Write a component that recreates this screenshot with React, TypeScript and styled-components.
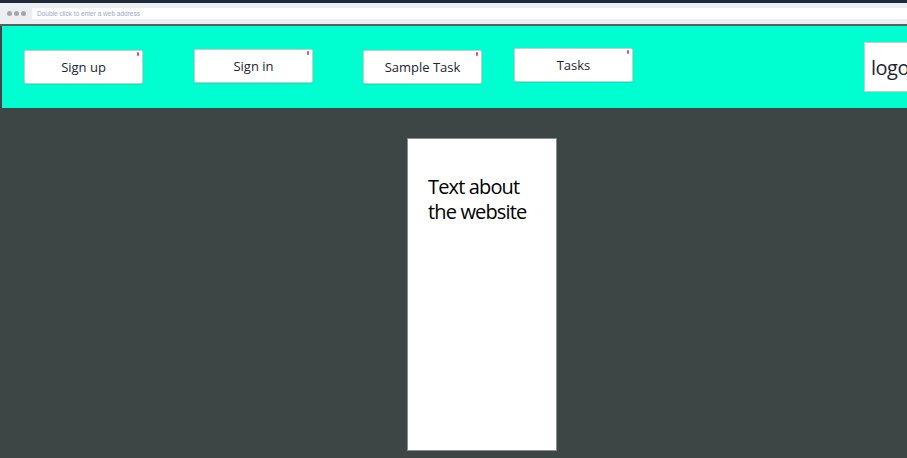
import React from "react";
import styled, { createGlobalStyle } from "styled-components";

const Global = createGlobalStyle`
  html, body { margin: 0; padding: 0; background: #3d4644; overflow: hidden; }
  body { font-family: "Open Sans", "Noto Sans", sans-serif; }
`;

const TopStrip = styled.div`
  height: 3px;
  background: #1f2a38;
`;

const Chrome = styled.div`
  height: 21px;
  background: #eceef1;
  display: flex;
  align-items: center;
  padding-left: 7px;
  border-bottom: 2px solid #5b6062;
`;

const Dots = styled.div`
  display: flex;
  gap: 2px;
  width: 25px;
  flex-shrink: 0;
`;

const Dot = styled.span`
  width: 5px;
  height: 5px;
  border-radius: 50%;
  background: #a3a7ac;
`;

const Address = styled.div`
  flex: 1;
  height: 11px;
  background: #fff;
  display: flex;
  align-items: center;
  padding-left: 5px;
  font-family: "Liberation Sans", sans-serif;
  font-size: 6.5px;
  color: #a3a6c4;
`;

const Page = styled.div`
  padding-left: 2px;
  background: #3d4644;
  height: 434px;
`;

const Header = styled.header`
  height: 82px;
  background: #00ffd0;
  display: flex;
  align-items: flex-start;
  padding-left: 22px;
  overflow: hidden;
`;

const NavButton = styled.button<{ $left: number; $top: number }>`
  position: relative;
  flex-shrink: 0;
  width: 119px;
  height: 34px;
  margin-left: ${(p) => p.$left}px;
  margin-top: ${(p) => p.$top}px;
  background: #fff;
  border: 1px solid #c9cccb;
  border-radius: 2px;
  box-shadow: 0 1px 1px rgba(0, 0, 0, 0.08);
  font-family: "Open Sans", "Noto Sans", sans-serif;
  font-size: 13px;
  color: #1d2430;
  padding: 0;
  display: flex;
  align-items: center;
  justify-content: center;
`;

const Badge = styled.span`
  position: absolute;
  top: 1px;
  right: 3px;
  width: 2px;
  height: 4px;
  border-radius: 1px;
  background: #f04a72;
`;

const Logo = styled.div`
  flex-shrink: 0;
  margin-left: 231px;
  margin-top: 16px;
  width: 60px;
  height: 48px;
  background: #fff;
  border: 1px solid #c9cccb;
  display: flex;
  align-items: center;
  padding-left: 6px;
  font-size: 20px;
  letter-spacing: -0.5px;
  color: #1d2430;
`;

const Main = styled.main`
  padding-top: 30px;
  padding-left: 405px;
`;

const Card = styled.section`
  box-sizing: border-box;
  width: 150px;
  height: 313px;
  background: #fff;
  border: 1px solid #8a8f8e;
  padding: 35px 0 0 20px;
  font-size: 20px;
  line-height: 25px;
  letter-spacing: -0.85px;
  color: #000;
`;

const buttons = [
  { label: "Sign up", left: 0, top: 24 },
  { label: "Sign in", left: 51, top: 23 },
  { label: "Sample Task", left: 50, top: 24 },
  { label: "Tasks", left: 32, top: 22 },
];

export default function App() {
  return (
    <>
      <Global />
      <TopStrip />
      <Chrome>
        <Dots>
          <Dot />
          <Dot />
          <Dot />
        </Dots>
        <Address>Double click to enter a web address</Address>
      </Chrome>
      <Page>
        <Header>
          {buttons.map((b) => (
            <NavButton key={b.label} $left={b.left} $top={b.top}>
              {b.label}
              <Badge />
            </NavButton>
          ))}
          <Logo>logo</Logo>
        </Header>
        <Main>
          <Card>
            Text about
            <br />
            the website
          </Card>
        </Main>
      </Page>
    </>
  );
}
